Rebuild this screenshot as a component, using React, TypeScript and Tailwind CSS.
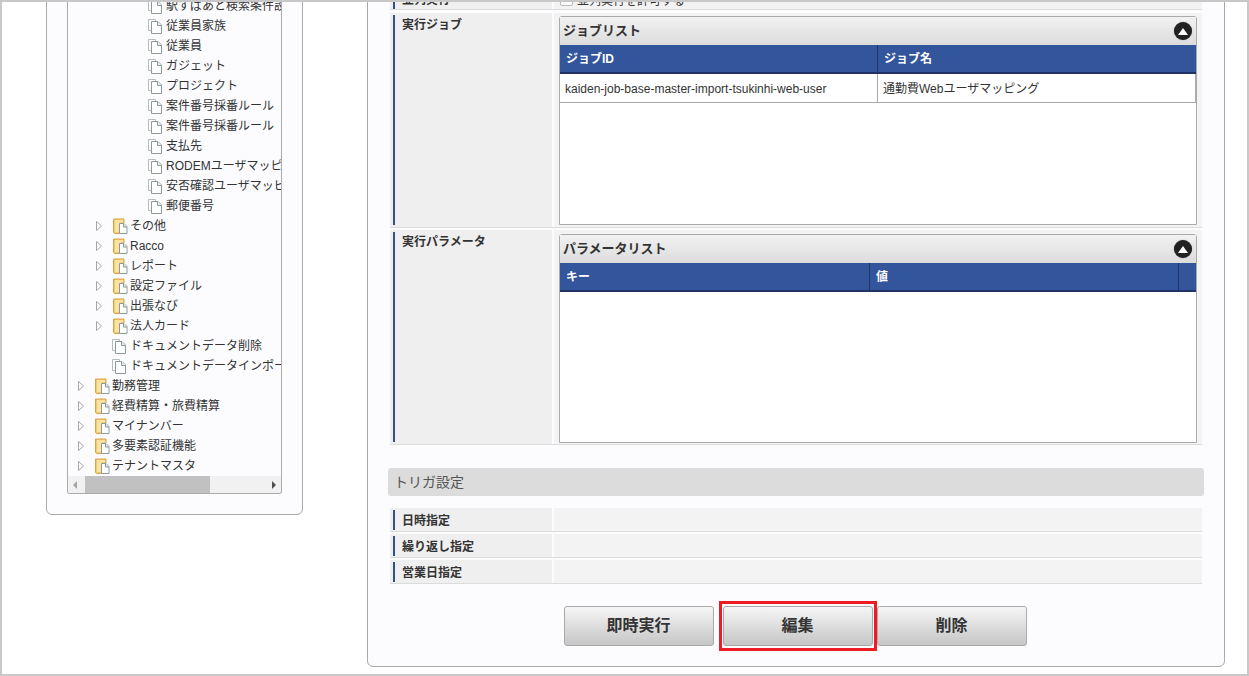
const font = '"Liberation Sans", "Noto Sans CJK JP", sans-serif';

function FileIcon() {
  return (
    <svg width="16" height="16" viewBox="0 0 16 16" className="shrink-0">
      <path d="M0.5 1.5h7v11h-7z" fill="#fff" stroke="#b4bcbc" />
      <path d="M3.5 3.5h6.5l3.5 3.5v8.5h-10z" fill="#fff" stroke="#8d9a9a" />
      <path d="M9.5 3.5v4h4" fill="#e8eeee" stroke="#8d9a9a" />
    </svg>
  );
}

function FolderIcon() {
  return (
    <svg width="16" height="16" viewBox="0 0 16 16" className="shrink-0">
      <path d="M0.5 1h10.5v4H7.5v10.500H1.500l-1-1z" fill="#f2c86e" stroke="#d8a64a" />
      <path d="M2 2h8v2.500H6.500V14H2z" fill="#fbe3a0" />
      <path d="M6.500 5.500h4.500l3 3v7H6.500z" fill="#fff" stroke="#8d9a9a" />
      <path d="M10.500 5.500v3.500h3.500" fill="#e3eaea" stroke="#8d9a9a" />
    </svg>
  );
}

function Arrow() {
  return (
    <svg width="6" height="10" viewBox="0 0 6 10" className="shrink-0">
      <path d="M0.5 0.5L5.5 5L0.5 9.5z" fill="#fff" stroke="#a6a6a6" />
    </svg>
  );
}

type NodeRow = { label: string; kind: "file" | "folder"; indent: string };

const treeRows: NodeRow[] = [
  { label: "駅すぱあと検索条件設定", kind: "file", indent: "pl-[80px]" },
  { label: "従業員家族", kind: "file", indent: "pl-[80px]" },
  { label: "従業員", kind: "file", indent: "pl-[80px]" },
  { label: "ガジェット", kind: "file", indent: "pl-[80px]" },
  { label: "プロジェクト", kind: "file", indent: "pl-[80px]" },
  { label: "案件番号採番ルール", kind: "file", indent: "pl-[80px]" },
  { label: "案件番号採番ルール", kind: "file", indent: "pl-[80px]" },
  { label: "支払先", kind: "file", indent: "pl-[80px]" },
  { label: "RODEMユーザマッピング", kind: "file", indent: "pl-[80px]" },
  { label: "安否確認ユーザマッピング", kind: "file", indent: "pl-[80px]" },
  { label: "郵便番号", kind: "file", indent: "pl-[80px]" },
  { label: "その他", kind: "folder", indent: "pl-[28px]" },
  { label: "Racco", kind: "folder", indent: "pl-[28px]" },
  { label: "レポート", kind: "folder", indent: "pl-[28px]" },
  { label: "設定ファイル", kind: "folder", indent: "pl-[28px]" },
  { label: "出張なび", kind: "folder", indent: "pl-[28px]" },
  { label: "法人カード", kind: "folder", indent: "pl-[28px]" },
  { label: "ドキュメントデータ削除", kind: "file", indent: "pl-[44px]" },
  { label: "ドキュメントデータインポート", kind: "file", indent: "pl-[44px]" },
  { label: "勤務管理", kind: "folder", indent: "pl-[10px]" },
  { label: "経費精算・旅費精算", kind: "folder", indent: "pl-[10px]" },
  { label: "マイナンバー", kind: "folder", indent: "pl-[10px]" },
  { label: "多要素認証機能", kind: "folder", indent: "pl-[10px]" },
  { label: "テナントマスタ", kind: "folder", indent: "pl-[10px]" },
];

function TreeRow({ row }: { row: NodeRow }) {
  return (
    <div className={`flex h-5 items-center whitespace-nowrap text-[12px] text-[#333] ${row.indent}`}>
      {row.kind === "folder" && (
        <span className="mr-[11px] flex w-[6px]">
          <Arrow />
        </span>
      )}
      {row.kind === "folder" ? <FolderIcon /> : <FileIcon />}
      <span className={row.kind === "folder" ? "ml-[1px]" : "ml-[2px]"}>{row.label}</span>
    </div>
  );
}

function Label({ children, className }: { children: string; className: string }) {
  return (
    <div className={`w-[162px] shrink-0 bg-[#efefef] px-[3px] ${className}`}>
      <div className="h-full border-l-[2px] border-[#2f4f8f] pl-[7px] text-[12px] font-bold leading-[16px] text-[#333]">
        {children}
      </div>
    </div>
  );
}

function ToggleButton() {
  return (
    <div className="flex h-[18px] w-[18px] items-center justify-center rounded-full bg-[#222] shadow-[0_0_1px_#666]">
      <div className="h-0 w-0 border-x-[5px] border-b-[7px] border-x-transparent border-b-white" />
    </div>
  );
}

function ListPanel({
  title,
  columns,
  rows,
}: {
  title: string;
  columns: { label: string; width: string }[];
  rows?: string[];
}) {
  return (
    <div className="flex h-[209px] flex-col rounded-t-[3px] border border-[#aaa] bg-white">
      <div className="flex h-[28px] shrink-0 items-center justify-between bg-gradient-to-b from-[#f2f2f2] to-[#dcdcdc] pl-[3px] pr-[4px] text-[13px] font-bold text-[#333]">
        <span>{title}</span>
        <ToggleButton />
      </div>
      <div className="flex h-[29px] shrink-0 border-b-[2px] border-[#1f3464] bg-[#33559b] text-[12px] font-bold text-white">
        {columns.map((c) => (
          <div key={c.label} className={`flex items-center border-r border-[#1f3464] pl-[6px] last:border-r-0 ${c.width}`}>
            {c.label}
          </div>
        ))}
      </div>
      {rows && (
        <div className="flex h-[29px] shrink-0 border-b border-[#aaa] pt-[2px] text-[12px] text-[#333]">
          {rows.map((r, i) => (
            <div key={r} className={`-mt-[2px] flex items-center border-r border-[#aaa] pl-[5px] pt-[2px] ${columns[i].width}`}>
              {r}
            </div>
          ))}
        </div>
      )}
    </div>
  );
}

function Button({ children }: { children: string }) {
  return (
    <div className="flex h-[40px] w-[150px] items-center justify-center rounded-[3px] border border-[#aaa] bg-gradient-to-b from-[#f6f6f6] to-[#c6c6c6] text-[16px] font-bold text-[#333]">
      {children}
    </div>
  );
}

function TriggerRow({ label }: { label: string }) {
  return (
    <div className="mb-[2px] flex h-[24px] gap-[2px] border-b border-[#dcdcdc]">
      <Label className="h-[23px] pb-px pt-[2px] [&>div]:pt-[1px] [&>div]:leading-[20px]">{label}</Label>
      <div className="h-[23px] flex-1 bg-[#f3f3f3]" />
    </div>
  );
}

export default function App() {
  return (
    <div
      className="flex h-[676px] w-[1249px] overflow-hidden border-2 border-[#c8c8c8] bg-white"
      style={{ fontFamily: font }}
    >
      {/* left tree panel */}
      <div className="w-[365px] shrink-0 pl-[44px]">
        <div className="-mt-[20px] h-[533px] w-[257px] rounded-b-[6px] border border-[#aaa] bg-[#fcfcff] px-[20px] pb-[20px]">
          <div className="flex h-full flex-col overflow-hidden rounded-b-[3px] border-x border-b border-[#aaa]">
            <div className="min-h-0 flex-1 overflow-hidden pt-[13px]">
              {treeRows.map((row, i) => (
                <TreeRow key={i} row={row} />
              ))}
            </div>
            <div className="flex h-[17px] shrink-0 items-center bg-[#f1f1f1]">
              <div className="ml-[5px] h-0 w-0 border-y-[4px] border-r-[4px] border-y-transparent border-r-[#a3a3a3]" />
              <div className="ml-[8px] h-[17px] w-[125px] bg-[#c1c1c1]" />
              <div className="ml-auto mr-[5px] h-0 w-0 border-y-[4px] border-l-[4px] border-y-transparent border-l-[#505050]" />
            </div>
          </div>
        </div>
      </div>

      {/* right detail panel */}
      <div className="-mt-[20px] h-[685px] w-[858px] shrink-0 rounded-b-[6px] border border-[#aaa] bg-[#fcfcff] px-[22px]">
        <div className="mb-[3px] flex h-[27px] gap-[2px] border-b border-[#dcdcdc]">
          <Label className="h-[26px] pt-[9px]">並列実行</Label>
          <div className="flex h-[26px] flex-1 items-end gap-[4px] bg-[#f3f3f3] pb-[1px] pl-[6px] text-[12px] text-[#333]">
            <span className="mb-[2px] h-[13px] w-[13px] shrink-0 rounded-[2px] border border-[#bbb] bg-white" />
            <span className="leading-[14px]">並列実行を許可する</span>
          </div>
        </div>
        <div className="mb-[2px] flex h-[215px] gap-[2px] border-b border-[#dcdcdc]">
          <Label className="h-[214px] py-[2px] [&>div]:pt-[2px]">実行ジョブ</Label>
          <div className="flex-1 bg-[#f3f3f3] px-[5px] pt-[3px]">
            <ListPanel
              title="ジョブリスト"
              columns={[
                { label: "ジョブID", width: "w-[318px]" },
                { label: "ジョブ名", width: "flex-1" },
              ]}
              rows={["kaiden-job-base-master-import-tsukinhi-web-user", "通勤費Webユーザマッピング"]}
            />
          </div>
        </div>
        <div className="flex h-[215px] gap-[2px] border-b border-[#dcdcdc]">
          <Label className="h-[214px] py-[2px] [&>div]:pt-[2px]">実行パラメータ</Label>
          <div className="flex-1 bg-[#f3f3f3] px-[5px] pt-[4px]">
            <ListPanel
              title="パラメータリスト"
              columns={[
                { label: "キー", width: "w-[310px]" },
                { label: "値", width: "w-[309px]" },
                { label: "", width: "flex-1" },
              ]}
            />
          </div>
        </div>

        <div className="-mx-[2px] mt-[23px] flex h-[28px] items-center rounded-[3px] bg-[#dcdcdc] pl-[6px] text-[14px] text-[#555]">
          トリガ設定
        </div>
        <div className="mt-[12px]">
          <TriggerRow label="日時指定" />
          <TriggerRow label="繰り返し指定" />
          <TriggerRow label="営業日指定" />
        </div>
        <div className="mt-[17px] flex items-center justify-center pr-[2px]">
          <Button>即時実行</Button>
          <div className="ml-[5px] border-[3px] border-[#ed1c24] px-[1px] py-[2px]">
            <Button>編集</Button>
          </div>
          <Button>削除</Button>
        </div>
      </div>
    </div>
  );
}
